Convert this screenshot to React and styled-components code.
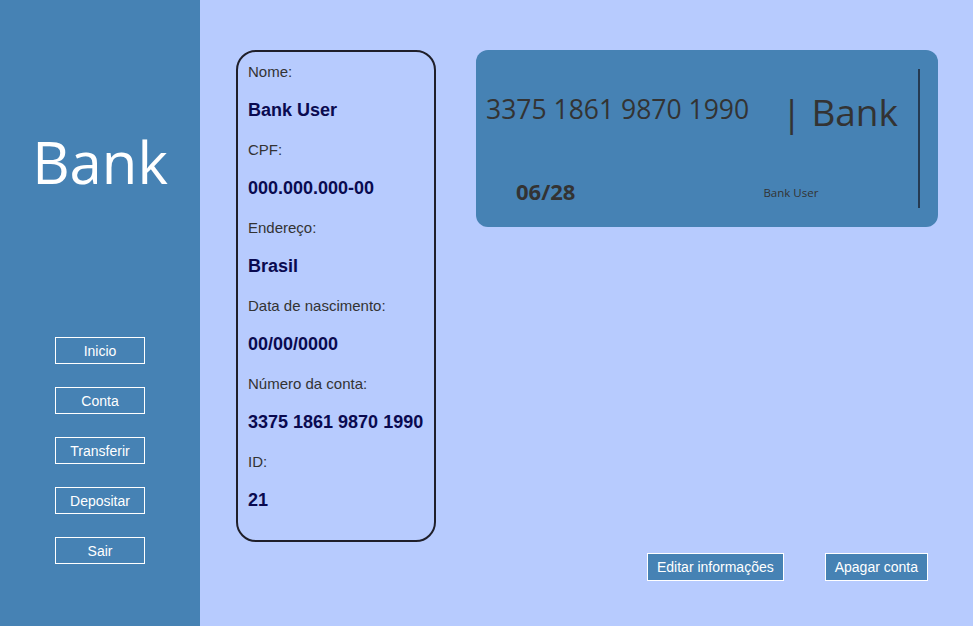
import React from "react";
import styled, { createGlobalStyle } from "styled-components";

const Global = createGlobalStyle`
  html, body { margin: 0; padding: 0; }
  body {
    background: #b7cbfe;
    font-family: "Liberation Sans", Arial, sans-serif;
  }
  * { box-sizing: border-box; }
`;

const Page = styled.div`
  display: flex;
  width: 973px;
  height: 626px;
  overflow: hidden;
`;

const Sidebar = styled.aside`
  width: 200px;
  flex-shrink: 0;
  background: #4682b4;
  display: flex;
  flex-direction: column;
  align-items: center;
`;

const Logo = styled.h1`
  margin: 124px 0 0;
  font-family: "Open Sans", "Noto Sans", sans-serif;
  font-weight: 400;
  font-size: 58px;
  line-height: 76px;
  color: #fff;
`;

const Nav = styled.nav`
  margin-top: 137px;
  display: flex;
  flex-direction: column;
  gap: 23px;
`;

const NavButton = styled.button`
  width: 90px;
  height: 27px;
  background: transparent;
  border: 1px solid #fff;
  color: #fff;
  font-family: "Liberation Sans", Arial, sans-serif;
  font-size: 14px;
  padding: 0;
  cursor: pointer;
`;

const Main = styled.main`
  flex: 1;
  display: flex;
  align-items: flex-start;
  padding: 50px 0 0 36px;
  gap: 40px;
`;

const InfoCard = styled.section`
  width: 200px;
  height: 492px;
  border: 2px solid #1f1f2a;
  border-radius: 20px;
  padding: 0 10px;
`;

const Label = styled.p`
  margin: 0;
  height: 39px;
  display: flex;
  align-items: center;
  font-size: 15px;
  color: #333333;
`;

const Value = styled.p`
  margin: 0;
  height: 39px;
  display: flex;
  align-items: center;
  font-size: 18px;
  font-weight: 700;
  color: #0a0a50;
`;

const RightColumn = styled.div`
  display: flex;
  flex-direction: column;
  width: 462px;
`;

const CreditCard = styled.div`
  height: 177px;
  background: #4682b4;
  border-radius: 12px;
  display: flex;
  padding: 19px 18px 19px 10px;
  font-family: "Open Sans", "Noto Sans", sans-serif;
  color: #333333;
`;

const CardBody = styled.div`
  flex: 1;
  display: flex;
  flex-direction: column;
`;

const CardTop = styled.div`
  height: 86px;
  display: flex;
  align-items: center;
  justify-content: space-between;
  padding-right: 20px;
`;

const CardBottom = styled.div`
  flex: 1;
  display: flex;
  align-items: center;
  padding-left: 30px;
  padding-top: 18px;
`;

const CardNumber = styled.div`
  font-size: 26.5px;
  margin-top: -6px;
`;

const CardBrand = styled.div`
  font-size: 37px;
  margin-top: -2px;
`;

const Expiry = styled.div`
  font-size: 22px;
  font-weight: 700;
`;

const Holder = styled.div`
  font-size: 11.5px;
  margin-left: 188px;
  margin-top: 4px;
`;

const CardRule = styled.div`
  width: 2px;
  background: #253a52;
`;

const Actions = styled.div`
  margin-top: 326px;
  display: flex;
  justify-content: flex-end;
  gap: 41px;
  padding-right: 10px;
`;

const ActionButton = styled.button`
  height: 28px;
  padding: 0 9px;
  background: #4682b4;
  border: 1px solid #fff;
  color: #fff;
  font-family: "Liberation Sans", Arial, sans-serif;
  font-size: 14px;
  cursor: pointer;
`;

const info = [
  ["Nome:", "Bank User"],
  ["CPF:", "000.000.000-00"],
  ["Endereço:", "Brasil"],
  ["Data de nascimento:", "00/00/0000"],
  ["Número da conta:", "3375 1861 9870 1990"],
  ["ID:", "21"],
];

export default function App() {
  return (
    <>
      <Global />
      <Page>
        <Sidebar>
          <Logo>Bank</Logo>
          <Nav>
            {["Inicio", "Conta", "Transferir", "Depositar", "Sair"].map((n) => (
              <NavButton key={n}>{n}</NavButton>
            ))}
          </Nav>
        </Sidebar>
        <Main>
          <InfoCard>
            {info.map(([l, v]) => (
              <React.Fragment key={l}>
                <Label>{l}</Label>
                <Value>{v}</Value>
              </React.Fragment>
            ))}
          </InfoCard>
          <RightColumn>
            <CreditCard>
              <CardBody>
                <CardTop>
                  <CardNumber>3375 1861 9870 1990</CardNumber>
                  <CardBrand>| Bank</CardBrand>
                </CardTop>
                <CardBottom>
                  <Expiry>06/28</Expiry>
                  <Holder>Bank User</Holder>
                </CardBottom>
              </CardBody>
              <CardRule />
            </CreditCard>
            <Actions>
              <ActionButton>Editar informações</ActionButton>
              <ActionButton>Apagar conta</ActionButton>
            </Actions>
          </RightColumn>
        </Main>
      </Page>
    </>
  );
}
